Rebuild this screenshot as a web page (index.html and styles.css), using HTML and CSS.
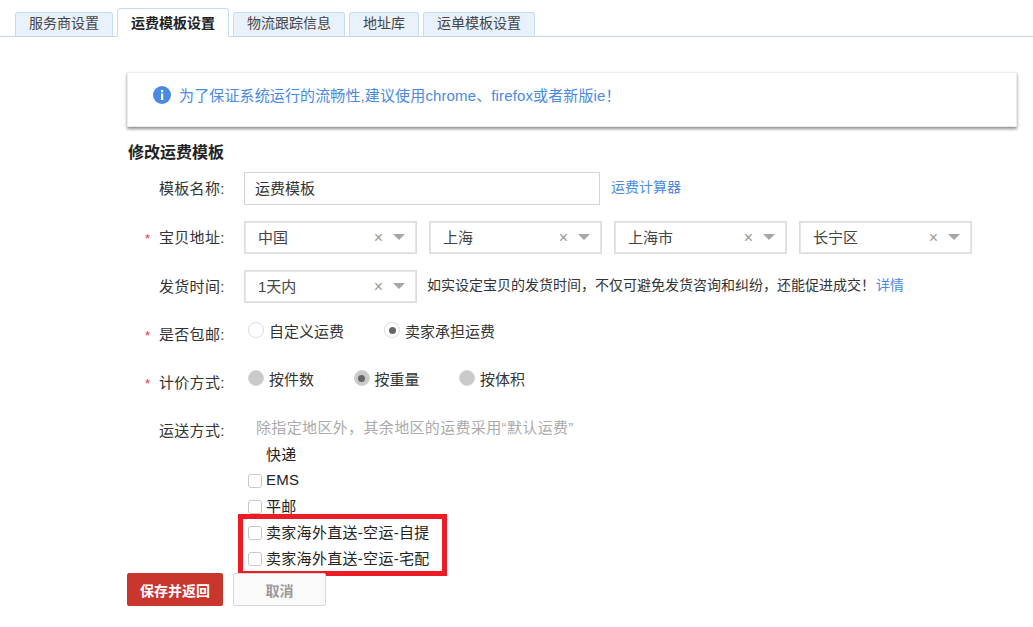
FILE: index.html
```html
<!DOCTYPE html>
<html lang="zh-CN">
<head>
<meta charset="utf-8">
<title>修改运费模板</title>
<link rel="stylesheet" href="styles.css">
</head>
<body>
<nav class="tabs">
  <a class="tab">服务商设置</a>
  <a class="tab active">运费模板设置</a>
  <a class="tab">物流跟踪信息</a>
  <a class="tab">地址库</a>
  <a class="tab">运单模板设置</a>
</nav>
<main class="content">
  <div class="alert">
    <svg class="info" width="18" height="18" viewBox="0 0 18 18"><circle cx="9" cy="9" r="9" fill="#4a8ae0"/><rect x="8" y="7.5" width="2.2" height="6.5" fill="#fff"/><rect x="8" y="4" width="2.2" height="2.2" fill="#fff"/></svg>
    <span>为了保证系统运行的流畅性,建议使用chrome、firefox或者新版ie！</span>
  </div>
  <h2 class="title">修改运费模板</h2>

  <div class="row row-name">
    <label class="label">模板名称:</label>
    <div class="input">运费模板</div>
    <a class="link calc">运费计算器</a>
  </div>

  <div class="row row-addr">
    <label class="label req">宝贝地址:</label>
    <div class="select"><span class="val">中国</span><span class="x">×</span><span class="caret"></span></div>
    <div class="select"><span class="val">上海</span><span class="x">×</span><span class="caret"></span></div>
    <div class="select"><span class="val">上海市</span><span class="x">×</span><span class="caret"></span></div>
    <div class="select"><span class="val">长宁区</span><span class="x">×</span><span class="caret"></span></div>
  </div>

  <div class="row row-time">
    <label class="label">发货时间:</label>
    <div class="select"><span class="val">1天内</span><span class="x">×</span><span class="caret"></span></div>
    <span class="hint">如实设定宝贝的发货时间，不仅可避免发货咨询和纠纷，还能促进成交！</span>
    <a class="link more">详情</a>
  </div>

  <div class="row row-free">
    <label class="label req">是否包邮:</label>
    <div class="radios">
      <span class="opt opt-a"><i class="radio"></i>自定义运费</span>
      <span class="opt"><i class="radio on"></i>卖家承担运费</span>
    </div>
  </div>

  <div class="row row-price">
    <label class="label req">计价方式:</label>
    <div class="radios">
      <span class="opt opt-b"><i class="radio off"></i>按件数</span>
      <span class="opt opt-b"><i class="radio off on"></i>按重量</span>
      <span class="opt"><i class="radio off"></i>按体积</span>
    </div>
  </div>

  <div class="row row-ship">
    <label class="label">运送方式:</label>
    <div class="ship">
      <p class="note">除指定地区外，其余地区的运费采用“默认运费”</p>
      <div class="check"><i class="box none"></i>快递</div>
      <div class="check"><i class="box"></i>EMS</div>
      <div class="check"><i class="box"></i>平邮</div>
      <div class="marked">
        <div class="check"><i class="box"></i>卖家海外直送-空运-自提</div>
        <div class="check"><i class="box"></i>卖家海外直送-空运-宅配</div>
      </div>
    </div>
  </div>

  <div class="actions">
    <button class="btn primary">保存并返回</button>
    <button class="btn ghost">取消</button>
  </div>
</main>
</body>
</html>
```
FILE: styles.css
```css
* { box-sizing: border-box; }
html, body { margin: 0; padding: 0; background: #fff; }
body {
  width: 1033px;
  height: 627px;
  overflow: hidden;
  font-family: "Liberation Sans", "Noto Sans CJK SC", sans-serif;
  font-size: 14px;
  color: #333;
}
.tabs {
  display: flex;
  align-items: flex-end;
  gap: 4px;
  height: 37px;
  padding-left: 15px;
  border-bottom: 1px solid #bcd8f5;
}
.tab {
  height: 25px;
  line-height: 21px;
  padding: 0 13px;
  margin-bottom: -1px;
  background: #e8f1fc;
  border: 1px solid #c5dcf5;
  border-bottom: 1px solid #bcd8f5;
  border-radius: 3px 3px 0 0;
  color: #444;
  font-size: 14px;
}
.tab.active {
  height: 29px;
  line-height: 28px;
  background: #fff;
  border-bottom-color: #fff;
  font-weight: bold;
  color: #222;
}
.content { padding: 35px 16px 0 127px; }
.alert {
  display: flex;
  align-items: center;
  gap: 8px;
  height: 55px;
  padding: 0 0 10px 25px;
  background: #fff;
  border: 1px solid #ececec;
  box-shadow: 0 2px 3px rgba(0, 0, 0, .45);
  color: #4a8ae0;
  font-size: 15px;
  letter-spacing: .13px;
}
.title {
  margin: 16px 0 0 1px;
  font-size: 16px;
  line-height: 20px;
  font-weight: bold;
  color: #222;
}
.row { display: flex; align-items: flex-start; }
.label {
  position: relative;
  flex: none;
  width: 117px;
  padding-left: 32px;
  font-size: 15px;
  letter-spacing: .3px;
  line-height: 33px;
  color: #333;
}
.req::before {
  content: "*";
  position: absolute;
  left: 18px;
  top: 1px;
  color: #e33;
  font-size: 13px;
}
.row-name { margin-top: 9px; }
.row-addr { margin-top: 16px; gap: 0 12px; }
.row-addr .label { margin-right: -12px; }
.row-time { margin-top: 16px; }
.row-free { margin-top: 13px; }
.row-price { margin-top: 10px; }
.row-ship { margin-top: 13px; }
.row-free .label, .row-price .label { line-height: 38px; }
.row-ship .label { line-height: 31px; }
.input {
  width: 356px;
  height: 33px;
  line-height: 31px;
  padding-left: 10px;
  border: 1px solid #d4d4d4;
  font-size: 15px;
  color: #333;
}
.link { color: #4a8ae0; font-size: 14px; line-height: 30px; }
.calc { margin-left: 11px; }
.select {
  display: flex;
  align-items: center;
  flex: none;
  width: 173px;
  height: 33px;
  padding: 0 11px 2px 13px;
  border: 1px solid #dcdcdc;
  box-shadow: inset 0 0 0 1px #e6e6e6;
  font-size: 15px;
  color: #444;
}
.val { flex: 1; }
.x { color: #999; font-size: 16px; line-height: 1; margin: 3px 10px 0 0; }
.caret {
  width: 0;
  height: 0;
  border-left: 6px solid transparent;
  border-right: 6px solid transparent;
  border-top: 6px solid #a6a6a6;
}
.hint { margin-left: 10px; font-size: 14px; line-height: 31px; color: #333; }
.more { margin-left: 1px; }
.radios { display: flex; }
.opt { display: flex; align-items: center; font-size: 15px; height: 28px; color: #333; }
.opt-a { width: 136px; }
.opt-b { width: 105.5px; }
.radio {
  position: relative;
  flex: none;
  width: 16px;
  height: 16px;
  margin: 0 5px 0 4px;
  border: 1px solid #ddd;
  border-radius: 50%;
  background: #fff;
}
.radio.off { background: #c9c9c9; border-color: #d4d4d4; }
.radio.on::after {
  content: "";
  position: absolute;
  left: 3.5px;
  top: 3.5px;
  width: 7px;
  height: 7px;
  border-radius: 50%;
  background: #666;
}
.ship { flex: none; width: 500px; }
.note { margin: 0 0 0 12px; font-size: 15px; letter-spacing: .35px; line-height: 26px; color: #aaa; }
.check { display: flex; align-items: center; height: 26px; padding-bottom: 2px; font-size: 15px; letter-spacing: .3px; color: #222; margin-left: 4px; }
.box {
  flex: none;
  width: 14px;
  height: 14px;
  margin-right: 4px;
  margin-top: 4px;
  border: 1px solid #c8c8c8;
  border-radius: 3px;
  background: #fff;
}
.box.none { border: 0; }
.marked {
  width: 199px;
  margin-left: -1px;
  padding-left: 1px;
  outline: 5px solid #ed1c24;
}
.marked .check { margin-left: 4px; }
.actions { display: flex; gap: 10px; margin-top: 2px; }
.btn {
  height: 33px;
  border-radius: 2px;
  font: inherit;
  font-size: 14px;
}
.primary {
  width: 96px;
  background: #c9362e;
  border: 1px solid #c9362e;
  color: #fff;
  font-weight: bold;
}
.ghost {
  width: 93px;
  background: #fafafa;
  border: 1px solid #d8d8d8;
  color: #999;
  font-weight: bold;
}
```
